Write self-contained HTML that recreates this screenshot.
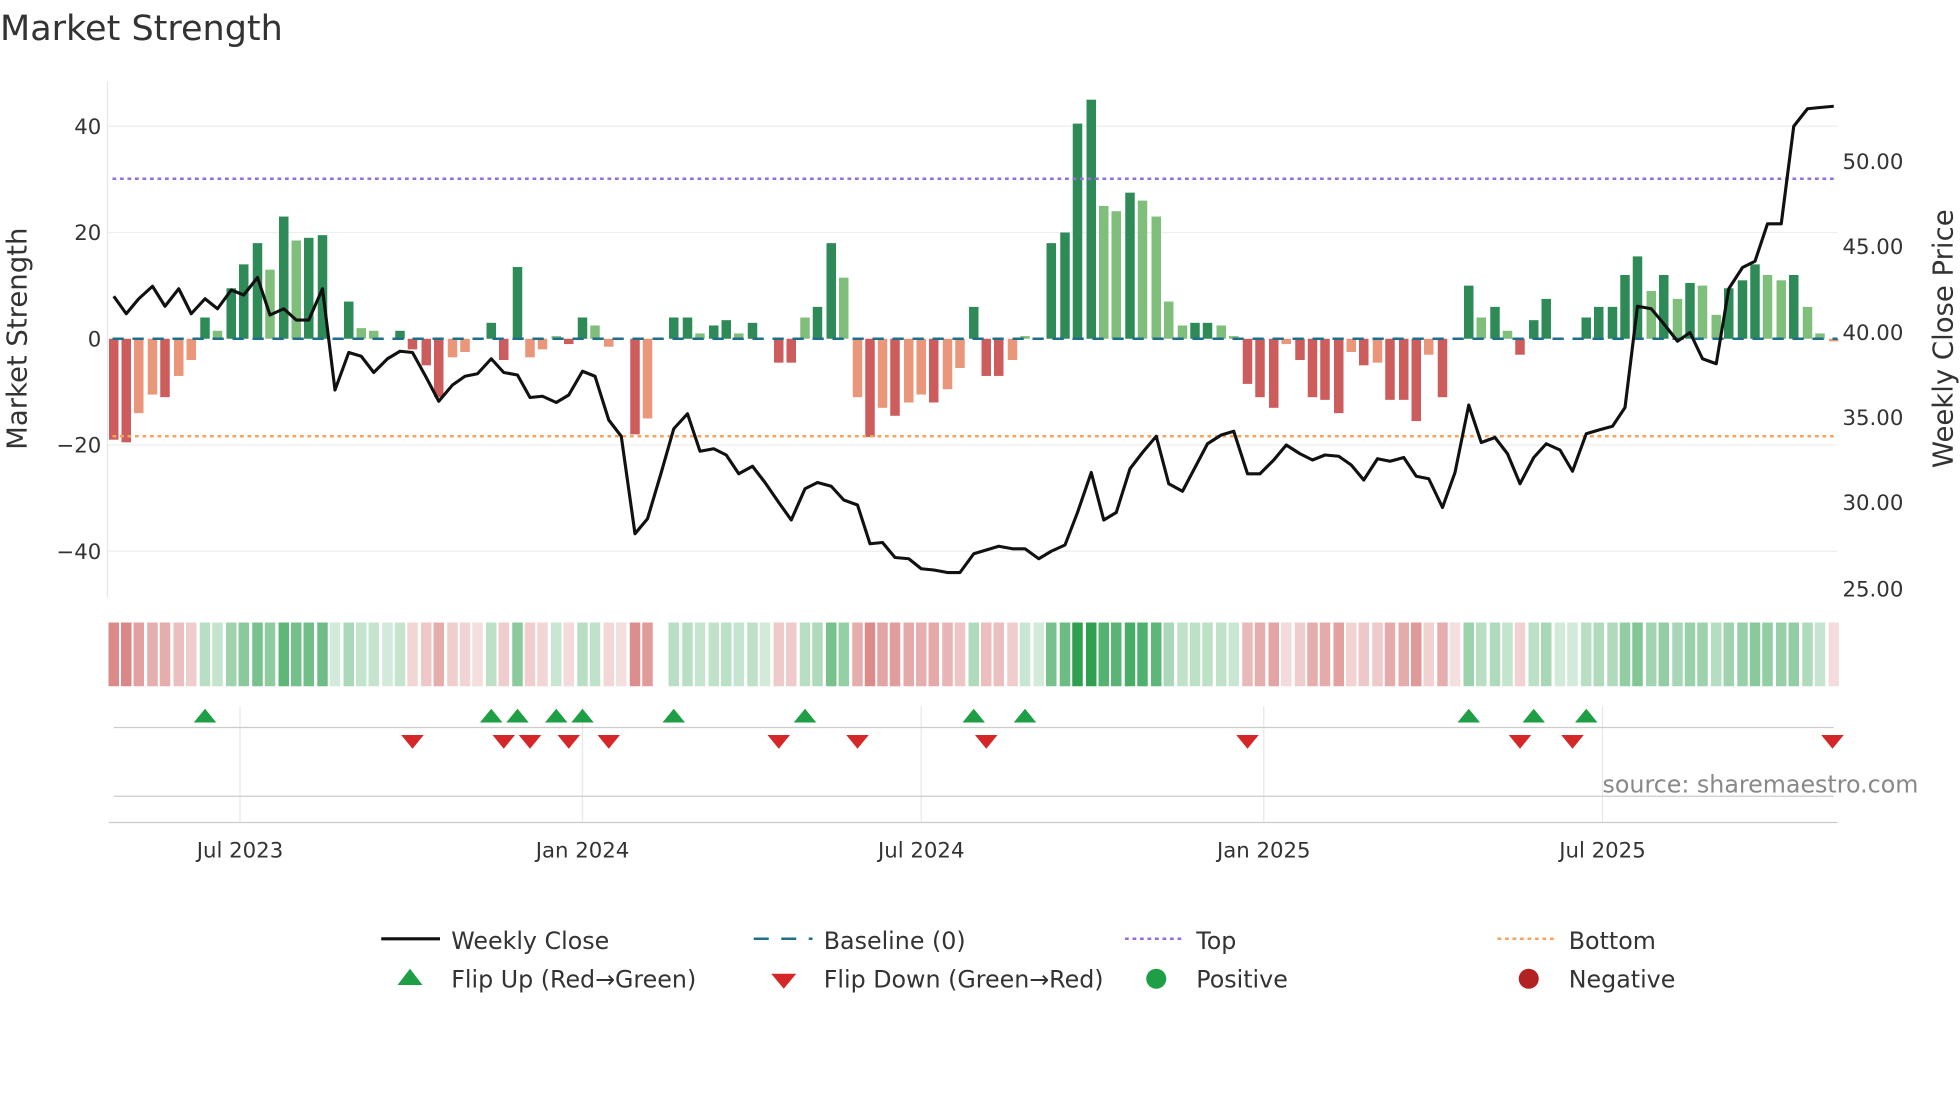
<!DOCTYPE html>
<html><head><meta charset="utf-8">
<style>
html,body{margin:0;padding:0;background:#fff;}
svg{display:block;font-family:"DejaVu Sans","Liberation Sans",sans-serif;}
</style></head>
<body>
<svg id="s" width="1960" height="1102" viewBox="0 0 1568 881.6" xmlns="http://www.w3.org/2000/svg">
<rect width="1568" height="882" fill="#fff"/>
<text x="0" y="32" font-size="28" fill="#333">Market Strength</text>
<g stroke="#eceef0" stroke-width="1">
<line x1="86" y1="101" x2="1470" y2="101"/><line x1="86" y1="186" x2="1470" y2="186"/>
<line x1="86" y1="356" x2="1470" y2="356"/><line x1="86" y1="441" x2="1470" y2="441"/>
</g>
<line x1="86" y1="65" x2="86" y2="478" stroke="#e6e6e6"/>
<g font-size="17" fill="#333" text-anchor="end">
<text x="81" y="107">40</text><text x="81" y="192">20</text><text x="81" y="277">0</text>
<text x="81" y="362">−20</text><text x="81" y="447">−40</text>
</g>
<g font-size="17" fill="#333">
<text x="1474" y="135">50.00</text><text x="1474" y="203">45.00</text><text x="1474" y="272">40.00</text>
<text x="1474" y="340">35.00</text><text x="1474" y="408">30.00</text><text x="1474" y="477">25.00</text>
</g>
<text transform="translate(21,271) rotate(-90)" font-size="22" fill="#333" text-anchor="middle">Market Strength</text>
<text transform="translate(1562,271) rotate(-90)" font-size="22" fill="#333" text-anchor="middle">Weekly Close Price</text>
<g id="bars"></g>
<line x1="90" y1="143" x2="1470" y2="143" stroke="#9370db" stroke-width="2" stroke-dasharray="3,3"/>
<line x1="90" y1="349" x2="1470" y2="349" stroke="#f4a460" stroke-width="2" stroke-dasharray="3,3"/>
<line x1="90" y1="271" x2="1470" y2="271" stroke="#1f6f8b" stroke-width="2" stroke-dasharray="9,7"/>
<polyline id="line" fill="none" stroke="#111" stroke-width="2.5" stroke-linejoin="round"/>
<g id="heat"></g>
<g stroke="#e8e8e8"><line x1="192" y1="565" x2="192" y2="658"/><line x1="466" y1="565" x2="466" y2="658"/>
<line x1="737" y1="565" x2="737" y2="658"/><line x1="1011" y1="565" x2="1011" y2="658"/><line x1="1282" y1="565" x2="1282" y2="658"/></g>
<line x1="91" y1="582" x2="1467" y2="582" stroke="#ccc"/>
<line x1="91" y1="637" x2="1467" y2="637" stroke="#ccc"/>
<line x1="87" y1="658" x2="1470" y2="658" stroke="#ccc"/>
<g id="flips"></g>
<text x="1282" y="634" font-size="19" fill="#888">source: sharemaestro.com</text>
<g font-size="17" fill="#333" text-anchor="middle">
<text x="192" y="686">Jul 2023</text><text x="466" y="686">Jan 2024</text><text x="737" y="686">Jul 2024</text>
<text x="1011" y="686">Jan 2025</text><text x="1282" y="686">Jul 2025</text>
</g>
<g font-size="19" fill="#333">
<line x1="305" y1="751" x2="352" y2="751" stroke="#111" stroke-width="2.5"/><text x="361" y="759">Weekly Close</text>
<line x1="603" y1="751" x2="650" y2="751" stroke="#1f6f8b" stroke-width="2" stroke-dasharray="12,10"/><text x="659" y="759">Baseline (0)</text>
<line x1="900" y1="751" x2="946" y2="751" stroke="#9370db" stroke-width="2" stroke-dasharray="3,3"/><text x="957" y="759">Top</text>
<line x1="1198" y1="751" x2="1245" y2="751" stroke="#f4a460" stroke-width="2" stroke-dasharray="3,3"/><text x="1255" y="759">Bottom</text>
<polygon points="318,788 338,788 328,775" fill="#1e9e45"/><text x="361" y="790">Flip Up (Red→Green)</text>
<polygon points="617,779 637,779 627,791" fill="#d62728"/><text x="659" y="790">Flip Down (Green→Red)</text>
<circle cx="925" cy="783" r="8" fill="#1e9e45"/><text x="957" y="790">Positive</text>
<circle cx="1223" cy="783" r="8" fill="#b22222"/><text x="1255" y="790">Negative</text>
</g>
</svg>
<script>
var NS="http://www.w3.org/2000/svg";
function el(t,a,p){var e=document.createElementNS(NS,t);for(var k in a)e.setAttribute(k,a[k]);document.getElementById(p).appendChild(e);return e;}
var B=[[91,-19],[101,-19.5],[111,-14],[122,-10.5],[132,-11],[143,-7],[153,-4],[164,4],[174,1.5],[185,9.5],[195,14],[206,18],[216,13],[227,23],[237,18.5],[247,19],[258,19.5],[268,0],[279,7],[289,2],[299,1.5],[310,0],[320,1.5],[330,-2],[341,-5],[351,-11],[362,-3.5],[372,-2.5],[382,0],[393,3],[403,-4],[414,13.5],[424,-3.5],[434,-2],[445,0.5],[455,-1],[466,4],[476,2.5],[487,-1.5],[497,0],[508,-18],[518,-15],[529,0],[539,4],[550,4],[560,1],[571,2.5],[581,3.5],[591,1],[602,3],[612,0],[623,-4.5],[633,-4.5],[644,4],[654,6],[665,18],[675,11.5],[686,-11],[696,-18.5],[706,-13],[716,-14.5],[727,-12],[737,-10.5],[747,-12],[758,-9.5],[768,-5.5],[779,6],[789,-7],[799,-7],[810,-4],[820,0.5],[831,0],[841,18],[852,20],[862,40.5],[873,45],[883,25],[893,24],[904,27.5],[914,26],[925,23],[935,7],[946,2.5],[956,3],[966,3],[977,2.5],[987,0.5],[998,-8.5],[1008,-11],[1019,-13],[1029,-1],[1040,-4],[1050,-11],[1060,-11.5],[1071,-14],[1081,-2.5],[1091,-5],[1102,-4.5],[1112,-11.5],[1123,-11.5],[1133,-15.5],[1143,-3],[1154,-11],[1164,0],[1175,10],[1185,4],[1196,6],[1206,1.5],[1216,-3],[1227,3.5],[1237,7.5],[1248,0],[1258,0],[1269,4],[1279,6],[1290,6],[1300,12],[1310,15.5],[1321,9],[1331,12],[1342,7.5],[1352,10.5],[1362,10],[1373,4.5],[1383,9.5],[1394,11],[1404,14],[1414,12],[1425,11],[1435,12],[1446,6],[1456,1],[1467,-0.5]];
var prev=0,lastSign=-1;
B.forEach(function(b,i){
  var v=b[1],x=b[0],a=Math.abs(v),dark=a>=Math.abs(prev);prev=v;
  if(v!==0){
    var c=v>0?(dark?"#2e8b57":"#7fbf7b"):(dark?"#cd5c5c":"#e9967a");
    var h=a*4.25;
    el("rect",{x:x-3.8,y:v>0?271-h:271,width:7.6,height:h,fill:c},"bars");
  }
  var hc=null;
  if(v!==0){ lastSign=v>0?1:-1;
    hc=v>0?"rgba(46,160,80,"+Math.min(1,0.25+a/40*0.9)+")":"rgba(205,92,92,"+(0.2+Math.min(1,a/20)*0.55)+")";}
  else if(x!==529){ hc=lastSign>0?"rgba(46,160,80,0.22)":"rgba(205,92,92,0.2)"; }
  if(hc) el("rect",{x:x-4.2,y:498,width:8.4,height:51,fill:hc},"heat");
});
var L=[[91,237],[101,251],[111,239],[122,229],[132,245],[143,231],[153,251],[164,239],[174,247],[185,232],[195,236],[206,222],[216,252],[227,247],[237,256],[247,256],[258,231],[268,312],[279,282],[289,285],[299,298],[310,287],[320,281],[330,282],[341,302],[351,321],[362,308],[372,301],[382,299],[393,287],[403,298],[414,300],[424,318],[434,317],[445,322],[455,316],[466,297],[476,301],[487,336],[497,349],[508,427],[518,415],[529,378],[539,343],[550,331],[560,361],[571,359],[581,364],[591,379],[602,373],[612,386],[623,402],[633,416],[644,391],[654,386],[665,389],[675,400],[686,404],[696,435],[706,434],[716,446],[727,447],[737,455],[747,456],[758,458],[768,458],[779,443],[789,440],[799,437],[810,439],[820,439],[831,447],[841,441],[852,436],[862,410],[873,378],[883,416],[893,410],[904,375],[914,362],[925,349],[935,387],[946,393],[956,374],[966,355],[977,348],[987,345],[998,379],[1008,379],[1019,368],[1029,356],[1040,363],[1050,368],[1060,364],[1071,365],[1081,372],[1091,384],[1102,367],[1112,369],[1123,366],[1133,381],[1143,383],[1154,406],[1164,378],[1175,324],[1185,354],[1196,350],[1206,363],[1216,387],[1227,366],[1237,355],[1248,360],[1258,377],[1269,347],[1279,344],[1290,341],[1300,326],[1310,245],[1321,247],[1331,259],[1342,273],[1352,266],[1362,287],[1373,291],[1383,231],[1394,214],[1404,209],[1414,179],[1425,179],[1435,101],[1446,87],[1456,86],[1467,85]];
document.getElementById("line").setAttribute("points",L.map(function(p){return p.join(",")}).join(" "));
[164,393,414,445,466,539,644,779,820,1175,1227,1269].forEach(function(x){
  el("polygon",{points:(x-9)+",578 "+(x+9)+",578 "+x+",567",fill:"#1e9e45"},"flips");});
[330,403,424,455,487,623,686,789,998,1216,1258,1466].forEach(function(x){
  el("polygon",{points:(x-9)+",588 "+(x+9)+",588 "+x+",599",fill:"#d62728"},"flips");});
</script>
</body></html>
